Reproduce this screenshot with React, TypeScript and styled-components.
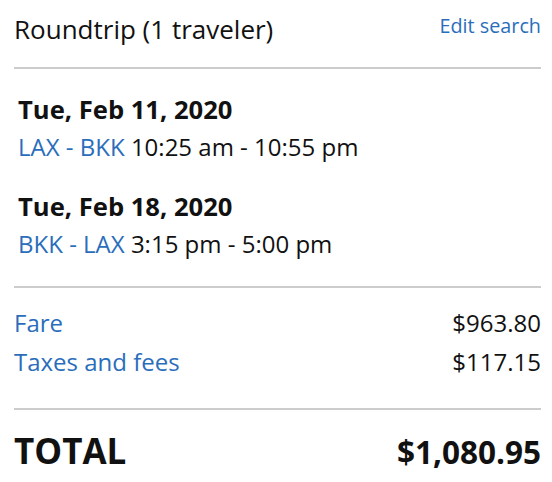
import React from 'react';
import styled, { createGlobalStyle } from 'styled-components';

const GlobalStyle = createGlobalStyle`
  html, body {
    margin: 0;
    padding: 0;
    background: #fff;
  }
  body {
    font-family: "Open Sans", "Noto Sans", sans-serif;
    color: #111;
    -webkit-font-smoothing: antialiased;
  }
`;

interface Flight {
  date: string;
  route: string;
  times: string;
}

interface Charge {
  label: string;
  amount: string;
}

const flights: Flight[] = [
  { date: 'Tue, Feb 11, 2020', route: 'LAX - BKK', times: '10:25 am - 10:55 pm' },
  { date: 'Tue, Feb 18, 2020', route: 'BKK - LAX', times: '3:15 pm - 5:00 pm' },
];

const charges: Charge[] = [
  { label: 'Fare', amount: '$963.80' },
  { label: 'Taxes and fees', amount: '$117.15' },
];

const App: React.FC = () => {
  return (
    <>
      <GlobalStyle />
      <SummaryStyles>
        <HeaderStyles>
          <TitleStyles>Roundtrip (1 traveler)</TitleStyles>
          <LinkStyles href="#">Edit search</LinkStyles>
        </HeaderStyles>
        <DividerStyles />
        <FlightListStyles>
          {flights.map(f => (
            <FlightStyles key={f.date}>
              <DateStyles>{f.date}</DateStyles>
              <RouteLineStyles>
                <RouteStyles>{f.route}</RouteStyles> {f.times}
              </RouteLineStyles>
            </FlightStyles>
          ))}
        </FlightListStyles>
        <DividerStyles />
        <ChargeListStyles>
          {charges.map(c => (
            <ChargeRowStyles key={c.label}>
              <ChargeLabelStyles>{c.label}</ChargeLabelStyles>
              <span>{c.amount}</span>
            </ChargeRowStyles>
          ))}
        </ChargeListStyles>
        <DividerStyles />
        <TotalRowStyles>
          <TotalLabelStyles>TOTAL</TotalLabelStyles>
          <TotalAmountStyles>$1,080.95</TotalAmountStyles>
        </TotalRowStyles>
      </SummaryStyles>
    </>
  );
};

export default App;

const SummaryStyles = styled.div`
  width: 527px;
  padding: 0 11px 0 14px;
`;

const HeaderStyles = styled.div`
  display: flex;
  justify-content: space-between;
  align-items: flex-start;
  padding: 12px 0 21px;
`;

const TitleStyles = styled.div`
  font-size: 26px;
  line-height: 34px;
`;

const LinkStyles = styled.a`
  margin-top: 1px;
  font-size: 19.8px;
  line-height: 26px;
  color: #2a6ebb;
  text-decoration: none;
`;

const DividerStyles = styled.hr`
  margin: 0;
  border: 0;
  height: 2px;
  background: #cccccc;
`;

const FlightListStyles = styled.div`
  display: flex;
  flex-direction: column;
  gap: 28px;
  padding: 25px 0 26px 4px;
`;

const FlightStyles = styled.div`
  display: flex;
  flex-direction: column;
  gap: 5px;
`;

const DateStyles = styled.div`
  font-size: 25.6px;
  font-weight: 700;
  line-height: 32px;
`;

const RouteLineStyles = styled.div`
  font-size: 24px;
  line-height: 32px;
`;

const RouteStyles = styled.span`
  color: #2a6ebb;
`;

const ChargeListStyles = styled.div`
  display: flex;
  flex-direction: column;
  gap: 7px;
  padding: 19px 0 30px;
`;

const ChargeRowStyles = styled.div`
  display: flex;
  justify-content: space-between;
  font-size: 24px;
  line-height: 32px;
`;

const ChargeLabelStyles = styled.span`
  color: #2a6ebb;
`;

const TotalRowStyles = styled.div`
  display: flex;
  justify-content: space-between;
  align-items: baseline;
  padding-top: 19px;
`;

const TotalLabelStyles = styled.span`
  font-size: 35px;
  font-weight: 700;
  line-height: 44px;
`;

const TotalAmountStyles = styled.span`
  font-size: 31.5px;
  font-weight: 700;
  line-height: 44px;
`;
